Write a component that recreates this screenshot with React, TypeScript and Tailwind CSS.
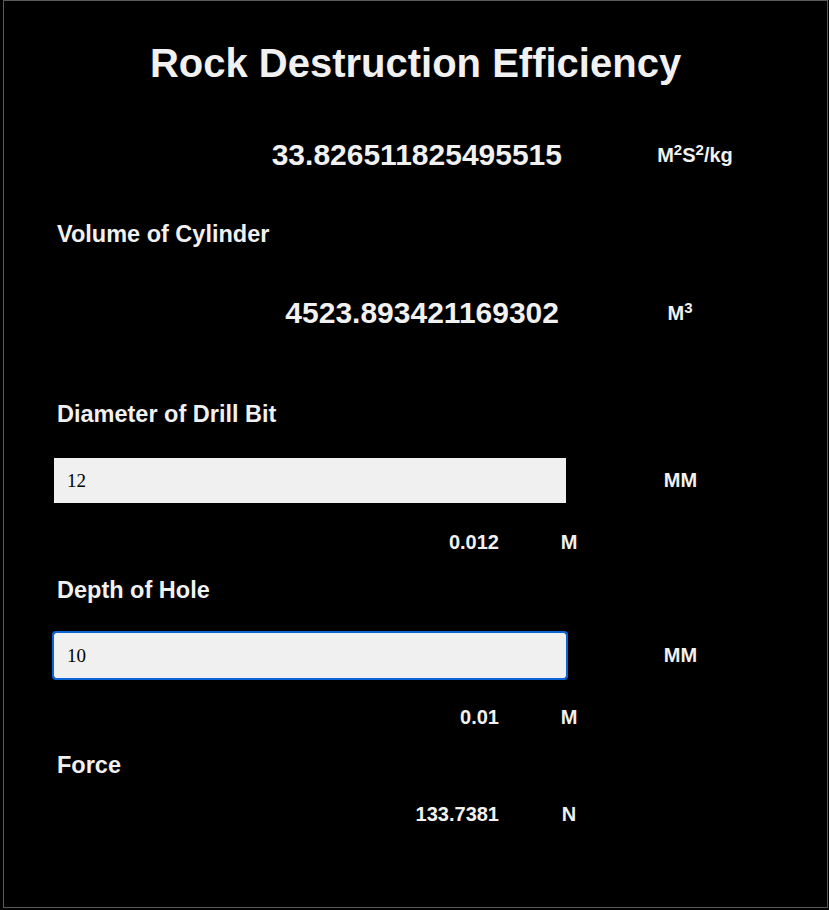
import { useState } from "react";

const sans = "font-['Liberation_Sans',Arial,sans-serif] font-bold";

type ResultRowProps = {
    value: string;
    unit: React.ReactNode;
    valueWidth: string;
    unitWidth: string;
    unitSize: string;
};

const ResultRow = ({ value, unit, valueWidth, unitWidth, unitSize }: ResultRowProps) => (
    <div className="flex h-9 items-center pl-[50px]">
        <span className={`${valueWidth} shrink-0 text-right text-[30px] leading-9`}>{value}</span>
        <span className={`${unitWidth} shrink-0 text-center ${unitSize} leading-9`}>{unit}</span>
    </div>
);

const Label = ({ children, mt }: { children: string; mt: string }) => (
    <div className={`${mt} pl-[53px] text-[23.5px] leading-7`}>{children}</div>
);

const SmallRow = ({ value, unit, mt }: { value: string; unit: string; mt: string }) => (
    <div className={`${mt} flex h-6 items-center`}>
        <span className="w-[495px] shrink-0 text-right text-[20px] leading-6">{value}</span>
        <span className="w-[140px] shrink-0 text-center text-[20px] leading-6">{unit}</span>
    </div>
);

export default function App() {
    const [diameter, setDiameter] = useState("12");
    const [depth, setDepth] = useState("10");

    const d = Number(diameter) / 1000;
    const h = Number(depth) / 1000;

    return (
        <div className={`min-h-screen bg-black text-[#f1f1f1] ${sans}`}>
            <div className="ml-[3px] h-[908px] w-[825px] border border-[#5a5a5a]">
                <h1 className="mt-[38px] text-center text-[40px] leading-[48px]">
                    Rock Destruction Efficiency
                </h1>

                <div className="mt-[50px]">
                    <ResultRow
                        value="33.826511825495515"
                        valueWidth="w-[508px]"
                        unitWidth="w-[266px]"
                        unitSize="text-[20px]"
                        unit={
                            <>
                                M<sup>2</sup>S<sup>2</sup>/kg
                            </>
                        }
                    />
                </div>

                <Label mt="mt-[47px]">Volume of Cylinder</Label>

                <div className="mt-[47px]">
                    <ResultRow
                        value="4523.893421169302"
                        valueWidth="w-[505px]"
                        unitWidth="w-[242px]"
                        unitSize="text-[20px]"
                        unit={
                            <>
                                M<sup>3</sup>
                            </>
                        }
                    />
                </div>

                <Label mt="mt-[69px]">Diameter of Drill Bit</Label>

                <div className="mt-[30px] flex h-[45px] items-center pl-[50px]">
                    <input
                        value={diameter}
                        onChange={(e) => setDiameter(e.target.value)}
                        className="h-[45px] w-[512px] shrink-0 bg-[#f0f0f0] pl-[13px] font-['Liberation_Serif','Times_New_Roman',serif] text-[19px] font-normal text-black outline-none"
                    />
                    <span className="w-[229px] shrink-0 text-center text-[20px] leading-[45px]">MM</span>
                </div>

                <SmallRow mt="mt-[27px]" value={String(d)} unit="M" />

                <Label mt="mt-[22px]">Depth of Hole</Label>

                <div className="mt-[29px] flex h-[45px] items-center pl-[50px]">
                    <input
                        value={depth}
                        onChange={(e) => setDepth(e.target.value)}
                        className="h-[45px] w-[512px] shrink-0 rounded-[2px] bg-[#f0f0f0] pl-[13px] font-['Liberation_Serif','Times_New_Roman',serif] text-[19px] font-normal text-black outline-2 outline-[#0b63d6] outline-solid"
                    />
                    <span className="w-[229px] shrink-0 text-center text-[20px] leading-[45px]">MM</span>
                </div>

                <SmallRow mt="mt-[27px]" value={String(h)} unit="M" />

                <Label mt="mt-[22px]">Force</Label>

                <SmallRow mt="mt-[23px]" value="133.7381" unit="N" />
            </div>
        </div>
    );
}
